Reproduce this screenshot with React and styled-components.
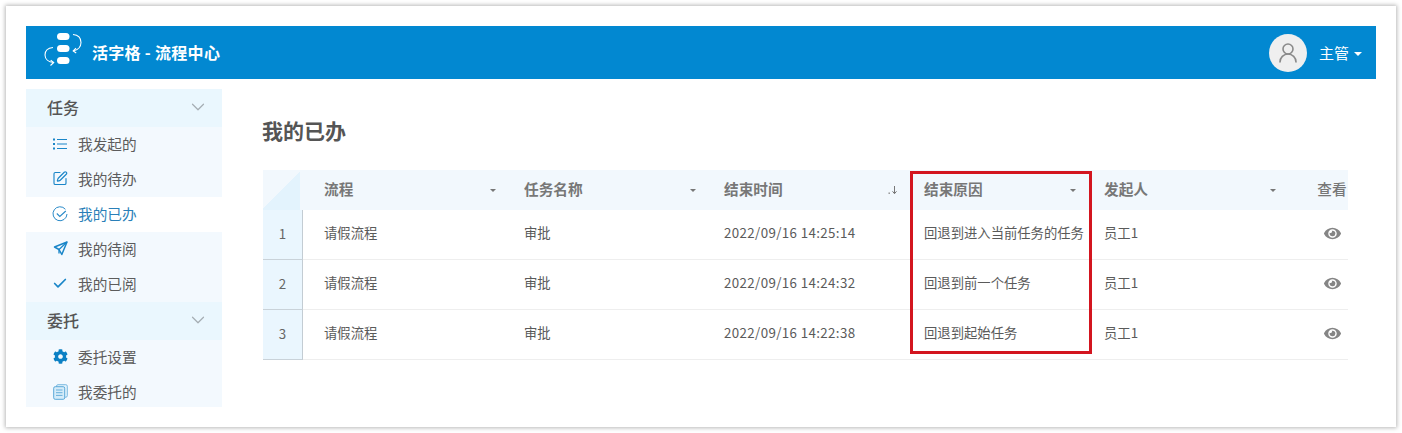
import React from 'react';
import styled, { createGlobalStyle } from 'styled-components';
import { FaCog, FaEye } from 'react-icons/fa';
import { SquarePen, Check, ChevronDown, UserRound } from 'lucide-react';

const FONT = `"Noto Sans CJK SC", "Liberation Sans", sans-serif`;

const Global = createGlobalStyle`
  html, body { margin: 0; padding: 0; background: #fff; }
  body { font-family: ${FONT}; color: #555; overflow: hidden; }
`;

const Frame = styled.div`
  position: relative;
  box-sizing: border-box;
  width: 1390px;
  height: 421px;
  margin: 6px;
  padding: 20px;
  background: #fff;
  box-shadow: 0 0 4px 1px rgba(0, 0, 0, 0.28);
  overflow: hidden;
`;
const Header = styled.header`
  width: 1350px;
  height: 53px;
  background: #0288d1;
  color: #fff;
  display: flex;
  align-items: center;
  justify-content: space-between;
  padding: 0 14px 0 16px;
  box-sizing: border-box;
`;
const Brand = styled.div`
  display: flex;
  align-items: center;
  gap: 10px;
  font-size: 16px;
  font-weight: 700;
  letter-spacing: 0.3px;
  padding-bottom: 2px;
`;
const UserBox = styled.div`
  display: flex;
  align-items: center;
  font-size: 15px;
`;
const Avatar = styled.div`
  width: 38px;
  height: 38px;
  border-radius: 50%;
  background: #efefef;
  display: flex;
  align-items: center;
  justify-content: center;
  color: #8a8a8a;
  margin-right: 12px;
`;
const UserCaret = styled.span`
  width: 0;
  height: 0;
  margin-left: 5px;
  margin-top: 2px;
  border-left: 4px solid transparent;
  border-right: 4px solid transparent;
  border-top: 4px solid #fff;
`;
const Body = styled.div`
  display: flex;
  padding-top: 10px;
`;
const Sidebar = styled.nav`
  width: 196px;
  height: 318px;
  overflow: hidden;
  background: #f3f9fe;
  flex: none;
`;
const Group = styled.div`
  height: 38px;
  box-sizing: border-box;
  display: flex;
  align-items: center;
  justify-content: space-between;
  padding: 0 13px 2px 21px;
  background: #eaf7fe;
  color: #555;
  font-size: 16px;
  font-weight: 500;
`;
const Item = styled.div`
  height: 35px;
  box-sizing: border-box;
  display: flex;
  align-items: center;
  padding: 0 0 2px 26px;
  font-size: 14.67px;
  color: ${p => (p.$active ? '#2a7fb8' : '#5c5c5c')};
  background: ${p => (p.$active ? '#fff' : 'transparent')};
`;
const ItemIcon = styled.span`
  width: 16px;
  height: 16px;
  margin-right: 10px;
  display: flex;
  align-items: center;
  justify-content: center;
  color: #1a86c8;
`;
const Main = styled.main`
  flex: 1;
  min-width: 0;
  padding-left: 40px;
`;
const Title = styled.h2`
  margin: 0;
  height: 81px;
  padding-top: 26px;
  box-sizing: border-box;
  font-size: 21px;
  line-height: 30px;
  font-weight: 700;
  color: #555;
`;
const TableWrap = styled.div`
  width: 1085px;
  margin-left: 1px;
  overflow: hidden;
`;
const Row = styled.div`
  display: grid;
  grid-template-columns: 40px 199px 200px 200px 180px 200px 100px;
  width: 1119px;
  height: ${p => (p.$head ? '40px' : '50px')};
  background: ${p => (p.$head ? '#f2f8fd' : '#fff')};
  font-size: 13.33px;
  color: #5a5a5a;
  & > :nth-child(2) { padding-left: 21px; }
`;
const Corner = styled.div`
  width: 37px;
  height: 40px;
  background: linear-gradient(135deg, #f2f8fd 50%, #e3f3fd 50%);
`;
const Index = styled.div`
  display: flex;
  align-items: center;
  justify-content: center;
  padding-bottom: 2px;
  box-sizing: border-box;
  background: #eaf6fe;
  border-right: 1px solid #c3ccd3;
  border-bottom: 1px solid #c9d2d9;
  color: #666;
`;
const HeadCell = styled.div`
  display: flex;
  align-items: center;
  justify-content: space-between;
  padding: 0 ${p => p.$pr ?? 6}px 4px 22px;
  font-weight: 700;
  color: #777;
  font-size: 14.67px;
  & > span, & > svg { margin-top: 4px; }
`;
const ViewHead = styled(HeadCell)`
  justify-content: center;
  padding: 0 0 4px;
  font-weight: 500;
`;
const Cell = styled.div`
  display: flex;
  align-items: center;
  padding-left: 22px;
  padding-bottom: 4px;
  border-bottom: 1px solid #eeeeee;
  white-space: nowrap;
`;
const TimeCell = styled(Cell)`
  letter-spacing: 0.37px;
`;
const EyeCell = styled(Cell)`
  justify-content: center;
  padding-left: 0;
  padding-bottom: 2px;
  color: #858585;
`;
const Caret = styled.span`
  width: 0;
  height: 0;
  border-left: 3px solid transparent;
  border-right: 3px solid transparent;
  border-top: 3px solid #777;
`;
const Highlight = styled.div`
  position: absolute;
  left: 904px;
  top: 165px;
  width: 176px;
  height: 177px;
  border: 3px solid #d3151f;
`;

const LogoMark = () => (
  <svg width="40" height="40" viewBox="0 0 40 40" fill="none" aria-hidden="true">
    <rect x="15" y="1" width="12.5" height="7" rx="3.5" fill="#fff" />
    <rect x="15" y="13" width="12.5" height="7" rx="3.5" fill="#fff" />
    <rect x="15" y="25" width="12.5" height="7" rx="3.5" fill="#fff" />
    <path d="M31 2.500c5 .5 8 3.500 8 8 0 4-3 7.500-7.500 8.500" stroke="#fff" strokeWidth="1.1" />
    <path d="M34 16.200l-2.800 2.800 3 2" stroke="#fff" strokeWidth="1.1" />
    <path d="M11 15.500c-5 .5-8 3.500-8 7.500 0 4 3.500 7 8.500 7.500" stroke="#fff" strokeWidth="1.1" />
    <path d="M8.500 33.500l3.200-3-3-2.300" stroke="#fff" strokeWidth="1.1" />
  </svg>
);
const ListIcon = () => (
  <svg width="14" height="12" viewBox="0 0 14 12" fill="none" aria-hidden="true">
    <path d="M4 1.500h10M4 6h10M4 10.500h10" stroke="#1a86c8" strokeWidth="1.200" />
    <path d="M0 .5h2v2H0zM0 5h2v2H0zM0 9.500h2v2H0z" fill="#1a86c8" />
  </svg>
);
const CircleTick = () => (
  <svg width="16" height="16" viewBox="0 0 16 16" fill="none" stroke="#2a8ac8" aria-hidden="true">
    <path d="M13.400 3.300A7 7 0 1 0 15 8" strokeWidth="1" />
    <path d="M4.800 7.500l3 3 6-5.500" strokeWidth="1.100" />
  </svg>
);
const PlaneIcon = () => (
  <svg width="15" height="15" viewBox="0 0 15 15" fill="none" stroke="#1a86c8" aria-hidden="true">
    <path d="M14 1 1.500 6l4.500 2.500L8.800 13.500z" strokeWidth="1.500" strokeLinejoin="round" />
    <path d="M14 1 6 8.500v4" strokeWidth="1.300" />
  </svg>
);
const DocsIcon = () => (
  <svg width="15" height="16" viewBox="0 0 15 16" fill="none" aria-hidden="true">
    <rect x="3.500" y="0.700" width="10.800" height="12.500" rx="1.500" fill="#e3f3fc" stroke="#7ab9e0" />
    <rect x="0.700" y="2.700" width="11" height="12.600" rx="1.500" fill="#d5ecf9" stroke="#5ba9d8" />
    <path d="M3 6h6.500M3 8.700h6.500M3 11.400h6.500" stroke="#68afdb" />
  </svg>
);
const SortMark = () => (
  <svg width="10" height="10" viewBox="0 0 10 10" fill="none" aria-hidden="true">
    <rect x="0.500" y="7.500" width="1.400" height="1.400" fill="#888" />
    <path d="M6.500 1v7.500M4.500 6.300l2 2.400 2-2.400" stroke="#777" strokeWidth="1" />
  </svg>
);

const rows = [
  ['2022/09/16 14:25:14', '回退到进入当前任务的任务'],
  ['2022/09/16 14:24:32', '回退到前一个任务'],
  ['2022/09/16 14:22:38', '回退到起始任务'],
];

export default function App() {
  return (
    <Frame>
      <Global />
      <Header>
        <Brand><LogoMark />活字格 - 流程中心</Brand>
        <UserBox>
          <Avatar><UserRound size={24} strokeWidth={1.6} /></Avatar>
          主管<UserCaret />
        </UserBox>
      </Header>
      <Body>
        <Sidebar>
          <Group>任务<ChevronDown size={22} strokeWidth={1.3} color="#a5adb3" /></Group>
          <Item><ItemIcon><ListIcon /></ItemIcon>我发起的</Item>
          <Item><ItemIcon><SquarePen size={17} strokeWidth={1.7} /></ItemIcon>我的待办</Item>
          <Item $active><ItemIcon><CircleTick /></ItemIcon>我的已办</Item>
          <Item><ItemIcon><PlaneIcon /></ItemIcon>我的待阅</Item>
          <Item><ItemIcon><Check size={19} strokeWidth={2.6} /></ItemIcon>我的已阅</Item>
          <Group>委托<ChevronDown size={22} strokeWidth={1.3} color="#a5adb3" /></Group>
          <Item><ItemIcon><FaCog size={15} color="#0b80c4" /></ItemIcon>委托设置</Item>
          <Item><ItemIcon><DocsIcon /></ItemIcon>我委托的</Item>
        </Sidebar>
        <Main>
          <Title>我的已办</Title>
          <TableWrap>
            <Row $head>
              <Corner />
              <HeadCell>流程<Caret /></HeadCell>
              <HeadCell>任务名称<Caret /></HeadCell>
              <HeadCell $pr={4}>结束时间<SortMark /></HeadCell>
              <HeadCell>结束原因<Caret /></HeadCell>
              <HeadCell>发起人<Caret /></HeadCell>
              <ViewHead>查看</ViewHead>
            </Row>
            {rows.map(([time, reason], i) => (
              <Row key={time}>
                <Index>{i + 1}</Index>
                <Cell>请假流程</Cell>
                <Cell>审批</Cell>
                <TimeCell>{time}</TimeCell>
                <Cell>{reason}</Cell>
                <Cell>员工1</Cell>
                <EyeCell><FaEye size={17} /></EyeCell>
              </Row>
            ))}
          </TableWrap>
        </Main>
      </Body>
      <Highlight />
    </Frame>
  );
}
